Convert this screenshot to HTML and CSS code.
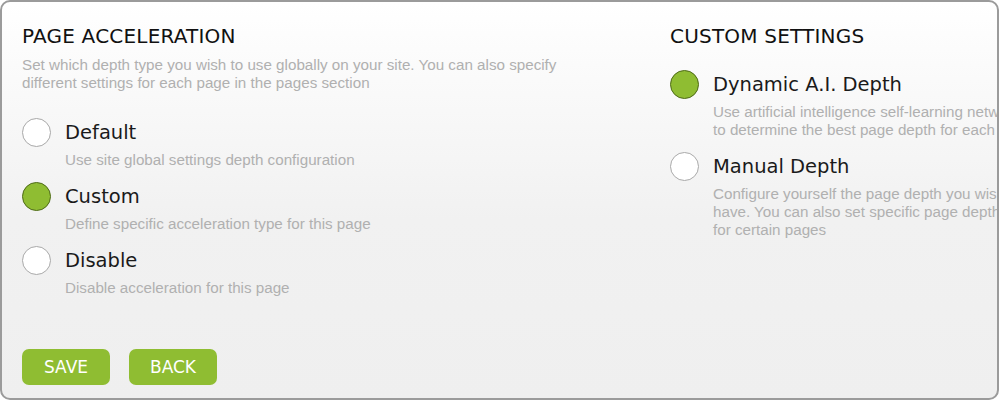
FILE: index.html
```html
<!DOCTYPE html>
<html>
<head>
<meta charset="utf-8">
<link rel="stylesheet" href="styles.css">
</head>
<body>
<div class="card">
  <div class="columns">
    <section class="col">
      <h2 class="title">PAGE ACCELERATION</h2>
      <p class="intro">Set which depth type you wish to use globally on your site. You can also specify different settings for each page in the pages section</p>
      <div class="options">
        <div class="option">
          <div class="row"><span class="radio"></span><span class="label">Default</span></div>
          <p class="desc">Use site global settings depth configuration</p>
        </div>
        <div class="option">
          <div class="row"><span class="radio on"></span><span class="label">Custom</span></div>
          <p class="desc">Define specific acceleration type for this page</p>
        </div>
        <div class="option">
          <div class="row"><span class="radio"></span><span class="label">Disable</span></div>
          <p class="desc">Disable acceleration for this page</p>
        </div>
      </div>
    </section>
    <section class="col right">
      <h2 class="title">CUSTOM SETTINGS</h2>
      <div class="options r-options">
        <div class="option">
          <div class="row"><span class="radio on"></span><span class="label">Dynamic A.I. Depth</span></div>
          <p class="desc wide">Use artificial intelligence self-learning network<br>to determine the best page depth for each page</p>
        </div>
        <div class="option">
          <div class="row"><span class="radio"></span><span class="label">Manual Depth</span></div>
          <p class="desc wide">Configure yourself the page depth you wish to<br>have. You can also set specific page depth<br>for certain pages</p>
        </div>
      </div>
    </section>
  </div>
  <div class="actions">
    <button class="btn">SAVE</button>
    <button class="btn">BACK</button>
  </div>
</div>
</body>
</html>
```
FILE: styles.css
```css
* { box-sizing: border-box; }
html, body { margin: 0; padding: 0; background: #fff; }
body { width: 1000px; height: 400px; overflow: hidden; }

.card {
  width: 999px;
  height: 400px;
  border: 2px solid #9b9b9b;
  border-radius: 10px;
  background: linear-gradient(#ffffff 0%, #f1f1f1 55%, #efefef 100%);
  overflow: hidden;
  display: flex;
  flex-direction: column;
  padding: 22px 0 13px 20px;
}

.columns {
  display: grid;
  grid-template-columns: 648px 1fr;
}
.col { min-width: 0; }
.right { overflow: hidden; }

.title {
  margin: 0;
  font-family: "DejaVu Sans", sans-serif;
  font-weight: 400;
  font-size: 20px;
  line-height: 24px;
  color: #111;
  letter-spacing: 0.2px;
}

.intro {
  margin: 8px 0 0;
  font-family: "Liberation Sans", Arial, sans-serif;
  font-size: 15.2px;
  line-height: 18px;
  color: #b0b0b0;
  width: 545px;
}

.options {
  margin-top: 25px;
  display: flex;
  flex-direction: column;
  gap: 12px;
}
.r-options { margin-top: 21px; }

.row {
  display: flex;
  align-items: center;
  gap: 14px;
  height: 30px;
}

.radio {
  width: 29px;
  height: 29px;
  border-radius: 50%;
  border: 1.5px solid #a8a8a8;
  background: #fff;
  flex: none;
}
.radio.on {
  background: #8fbd32;
  border-color: #4e6a18;
}

.label {
  font-family: "DejaVu Sans", sans-serif;
  font-size: 19.5px;
  color: #1a1a1a;
}

.desc {
  margin: 4px 0 0 43px;
  font-family: "Liberation Sans", Arial, sans-serif;
  font-size: 15.2px;
  line-height: 18px;
  color: #b0b0b0;
}
.desc.wide { white-space: nowrap; }

.actions {
  margin-top: auto;
  display: flex;
  gap: 19px;
}

.btn {
  width: 88px;
  height: 36px;
  border: none;
  border-radius: 7px;
  background: #8fbd32;
  color: #fff;
  font-family: "DejaVu Sans", sans-serif;
  font-size: 17px;
  padding: 0;
}
```
